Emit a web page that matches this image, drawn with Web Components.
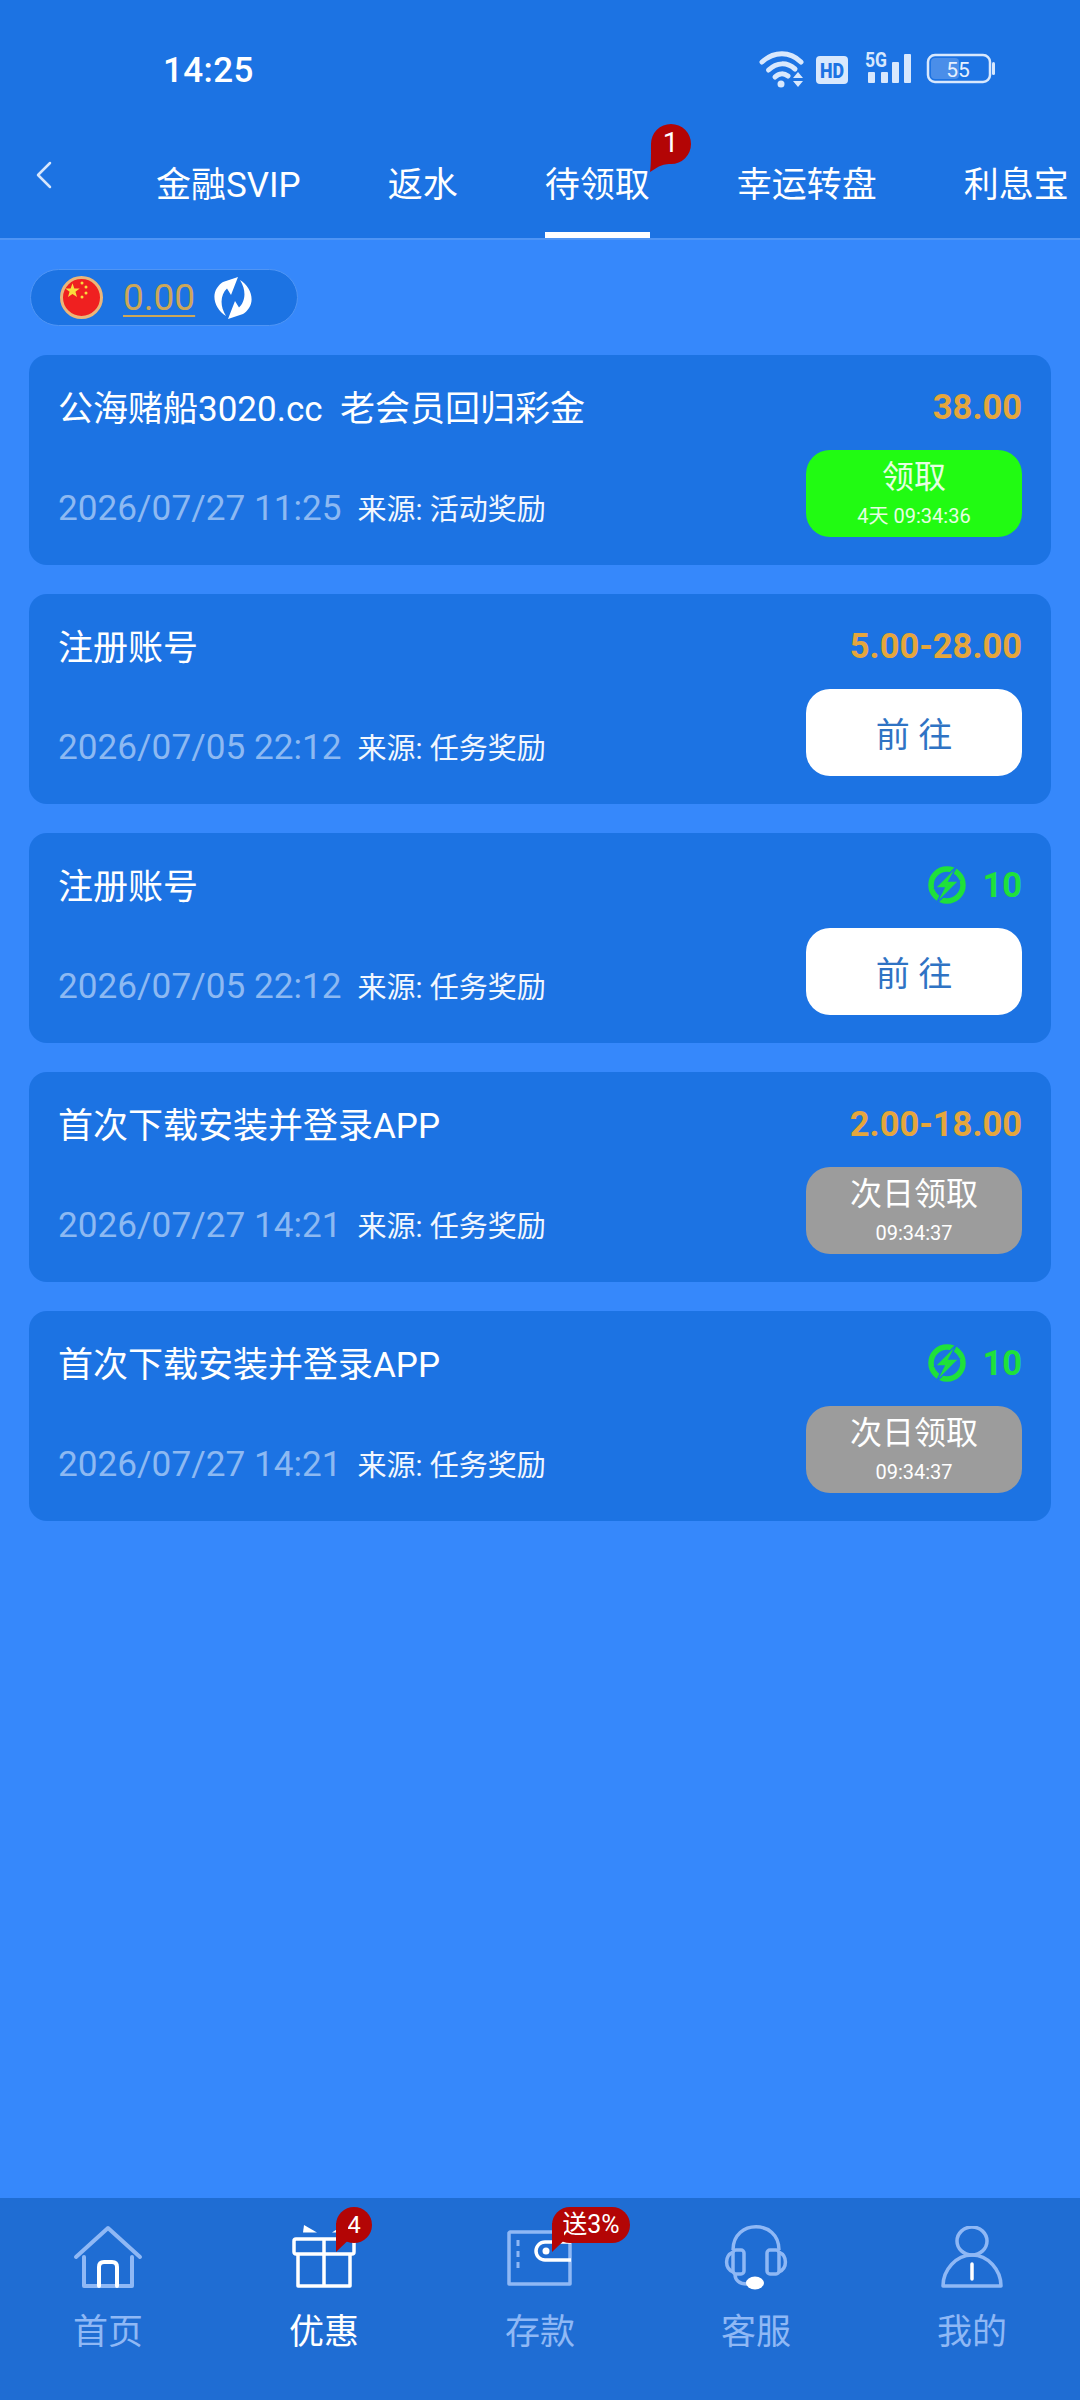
<!DOCTYPE html>
<html lang="zh">
<head>
<meta charset="utf-8">
<title>待领取</title>
<style>
    html, body { margin: 0; padding: 0; }
    body {
        width: 1080px;
        height: 2400px;
        display: flex;
        flex-direction: column;
        background: #3688fb;
        font-family: Roboto, "Noto Sans CJK SC", sans-serif;
        color: #fff;
        overflow: hidden;
    }
</style>
</head>
<body>
<app-header></app-header>
<balance-pill amount="0.00"></balance-pill>
<task-list>
    <task-card title="公海赌船3020.cc&nbsp;&nbsp;老会员回归彩金" amount="38.00" date="2026/07/27 11:25" source="来源: 活动奖励" kind="claim" label="领取" sub="4天 09:34:36"></task-card>
    <task-card title="注册账号" amount="5.00-28.00" date="2026/07/05 22:12" source="来源: 任务奖励" kind="go" label="前 往"></task-card>
    <task-card title="注册账号" energy="10" date="2026/07/05 22:12" source="来源: 任务奖励" kind="go" label="前 往"></task-card>
    <task-card title="首次下载安装并登录APP" amount="2.00-18.00" date="2026/07/27 14:21" source="来源: 任务奖励" kind="wait" label="次日领取" sub="09:34:37"></task-card>
    <task-card title="首次下载安装并登录APP" energy="10" date="2026/07/27 14:21" source="来源: 任务奖励" kind="wait" label="次日领取" sub="09:34:37"></task-card>
</task-list>
<nav-bar></nav-bar>

<script>
// status bar + scrolling tabs
class AppHeader extends HTMLElement {
    constructor() {
        super();
        this.attachShadow({ mode: 'open' });
        this.shadowRoot.innerHTML = `
            <style>
                :host {
                    display: block;
                    flex: none;
                    height: 240px;
                    box-sizing: border-box;
                    background: #1c73e3;
                    border-bottom: 2px solid #4f95f5;
                }
                .status {
                    height: 107px;
                    display: flex;
                    align-items: center;
                    padding: 33px 85px 0 163px;
                    box-sizing: border-box;
                }
                .time { font-size: 35px; font-weight: 500; letter-spacing: .4px; flex: 1; }
                .icons { height: 40px; overflow: visible; }
                .tabs {
                    height: 131px;
                    display: flex;
                    gap: 87px;
                    font-size: 35px;
                    line-height: 42px;
                    white-space: nowrap;
                }
                .back { width: 17px; margin: 54px 17px 0 35px; height: 28px; flex: none; }
                .tab {
                    position: relative;
                    box-sizing: border-box;
                    height: 131px;
                    padding-top: 58px;
                    border-bottom: 6px solid transparent;
                }
                .tab.on { border-bottom-color: #fff; }
                .badge { position: absolute; left: 105px; top: 17px; width: 42px; height: 48px; }
                .badge span {
                    position: absolute; left: 0; top: 0; width: 42px; height: 40px;
                    text-align: center; font-size: 28px; line-height: 38px;
                }
                .badge svg { position: absolute; left: 0; top: 0; }
            </style>
            <div class="status">
                <div class="time">14:25</div>
                <svg class="icons" width="236" height="40" viewBox="0 0 236 40">
                    <g fill="none" stroke="#d8e8fd" stroke-linecap="round" transform="translate(1 0)">
                        <path d="M2 12C14 1 30 1 41 12" stroke-width="5"/>
                        <path d="M8.500 20C17 12 27 12 35 19" stroke-width="5"/>
                        <path d="M15 27C19 23 24 23 28 26" stroke-width="5"/>
                    </g>
                    <circle cx="22" cy="34" r="3.500" fill="#d8e8fd"/>
                    <path d="M34 28l5-6 5 6zM34 31l5 6 5-6z" fill="#d8e8fd"/>
                    <rect x="57" y="6" width="32" height="28" rx="4" fill="#d8e8fd"/>
                    <text x="73" y="28" text-anchor="middle" font-family="Roboto, sans-serif" font-size="21" font-weight="900" fill="#1c73e3" textLength="24" lengthAdjust="spacingAndGlyphs">HD</text>
                    <text x="106" y="17" font-family="Roboto, sans-serif" font-size="20" font-weight="700" fill="#d8e8fd" textLength="22" lengthAdjust="spacingAndGlyphs">5G</text>
                    <g fill="#d8e8fd">
                        <rect x="109" y="22" width="7" height="11" rx="1"/>
                        <rect x="122" y="22" width="7" height="11" rx="1"/>
                        <rect x="133" y="12" width="7" height="21" rx="1"/>
                        <rect x="145" y="4" width="7" height="29" rx="1"/>
                    </g>
                    <rect x="169" y="5" width="62" height="27" rx="7" fill="none" stroke="#d8e8fd" stroke-width="2.500"/>
                    <rect x="172" y="8" width="28" height="21" rx="4" fill="#4a8ee9"/>
                    <rect x="233" y="12" width="3" height="13" rx="1.500" fill="#d8e8fd"/>
                    <text x="199" y="27" text-anchor="middle" font-family="Roboto, sans-serif" font-size="21" fill="#e6f0fe">55</text>
                </svg>
            </div>
            <div class="tabs">
                <svg class="back" viewBox="0 0 17 28" fill="none" stroke="#d6e6fc" stroke-width="2.500" stroke-linecap="round" stroke-linejoin="round"><path d="M15 2L3 14l12 12"/></svg>
                <div class="tab">金融SVIP</div>
                <div class="tab">返水</div>
                <div class="tab on">待领取
                    <div class="badge">
                        <svg width="42" height="48" viewBox="0 0 42 48"><path d="M21 0a20 20 0 0 1 0 40c-6 0-9 1-13 3L0 48c1-7 1-13 1-28A20 20 0 0 1 21 0z" fill="#b30505"/></svg>
                        <span>1</span>
                    </div>
                </div>
                <div class="tab">幸运转盘</div>
                <div class="tab">利息宝</div>
            </div>
        `;
    }
}

// flag + balance + refresh
class BalancePill extends HTMLElement {
    constructor() {
        super();
        this.attachShadow({ mode: 'open' });
    }
    connectedCallback() {
        this.shadowRoot.innerHTML = `
            <style>
                :host {
                    display: flex;
                    flex: none;
                    align-items: center;
                    box-sizing: border-box;
                    width: 268px;
                    height: 57px;
                    margin: 29px 0 0 30px;
                    padding-left: 29px;
                    background: #1c73e3;
                    border: 1px solid #4f95f5;
                    border-radius: 29px;
                }
                .amount {
                    margin: 0 18px 0 20px;
                    font-size: 37px;
                    line-height: 46px;
                    color: #cca759;
                    text-decoration: underline;
                    text-underline-offset: 5px;
                    text-decoration-thickness: 2px;
                }
            </style>
            <svg width="43" height="43" viewBox="0 0 43 43">
                <circle cx="21.500" cy="21.500" r="20" fill="#ef2020" stroke="#ebb679" stroke-width="3"/>
                <path d="M12.500 8l2 5.500 5.800.2-4.600 3.500 1.700 5.600-4.900-3.300-4.900 3.300 1.700-5.600-4.600-3.500 5.800-.2z" transform="translate(1 0) scale(.92)" fill="#fadc3c"/>
                <g fill="#fadc3c"><circle cx="22" cy="7" r="1.500"/><circle cx="26" cy="11" r="1.500"/><circle cx="26" cy="17" r="1.500"/><circle cx="22" cy="21" r="1.500"/></g>
            </svg>
            <span class="amount">${this.getAttribute('amount')}</span>
            <svg width="40" height="42" viewBox="0 0 40 42" fill="#fff">
                <path d="M25 0L18 18L14 11.500C8 17 6 28 13 39C3 33-2 20 4 11C6 8 8 6 10 5z"/>
                <path d="M25 0L18 18L14 11.500C8 17 6 28 13 39C3 33-2 20 4 11C6 8 8 6 10 5z" transform="rotate(180 20 21)"/>
            </svg>
        `;
    }
}

class TaskList extends HTMLElement {
    constructor() {
        super();
        this.attachShadow({ mode: 'open' });
        this.shadowRoot.innerHTML = `
            <style>
                :host {
                    display: flex;
                    flex-direction: column;
                    flex: 1;
                    gap: 29px;
                    padding: 29px 29px 0;
                }
            </style>
            <slot></slot>
        `;
    }
}

class TaskCard extends HTMLElement {
    constructor() {
        super();
        this.attachShadow({ mode: 'open' });
    }
    connectedCallback() {
        const a = (n) => this.getAttribute(n);
        const right = a('energy')
            ? `<div class="energy">
                   <svg width="38" height="38" viewBox="0 0 38 38">
                       <circle cx="19" cy="19" r="16" fill="none" stroke="#1fe13a" stroke-width="5.500"/>
                       <path d="M29 0L7 22h9L8 38l23-23h-10z" fill="#1fe13a" stroke="#1c73e3" stroke-width="1.500"/>
                   </svg>
                   <span>${a('energy')}</span>
               </div>`
            : `<div class="amount">${a('amount')}</div>`;
        const sub = a('sub') ? `<span class="sub">${a('sub')}</span>` : '';
        this.shadowRoot.innerHTML = `
            <style>
                :host {
                    display: block;
                    box-sizing: border-box;
                    height: 210px;
                    padding: 28px 29px 28px;
                    background: #1c73e3;
                    border-radius: 18px;
                }
                .top, .bottom { display: flex; align-items: center; justify-content: space-between; }
                .top { height: 48px; margin-bottom: 19px; }
                .title { font-size: 35px; color: #fff; white-space: nowrap; margin-top: -4px; }
                .amount { font-size: 34.500px; font-weight: 700; color: #e5a63c; }
                .energy { display: flex; align-items: center; gap: 16px; font-size: 34.500px; font-weight: 700; color: #1fe13a; }
                .bottom { height: 87px; }
                .meta { display: flex; align-items: baseline; gap: 16px; margin-top: 28px; white-space: nowrap; }
                .date { font-size: 35.200px; color: #8db9f2; }
                .source { font-size: 29px; color: #f2f7fe; }
                .btn {
                    width: 216px;
                    height: 87px;
                    display: flex;
                    flex-direction: column;
                    align-items: center;
                    justify-content: center;
                    border-radius: 24px;
                    font-size: 32px;
                    line-height: 40px;
                }
                .sub { font-size: 20px; line-height: 26px; margin-top: 6px; }
                .claim, .wait { justify-content: flex-start; padding-top: 7px; box-sizing: border-box; }
                .claim { background: #21fb12; color: #e6ffe2; }
                .wait { background: #9c9c9c; color: #fff; }
                .go { background: #fff; color: #2f73c4; font-size: 34px; padding-top: 4px; box-sizing: border-box; }
            </style>
            <div class="top">
                <div class="title">${a('title')}</div>
                ${right}
            </div>
            <div class="bottom">
                <div class="meta">
                    <span class="date">${a('date')}</span>
                    <span class="source">${a('source')}</span>
                </div>
                <div class="btn ${a('kind')}"><span>${a('label')}</span>${sub}</div>
            </div>
        `;
    }
}

// bottom navigation
const NAV_ICONS = {
    home: `<svg width="70" height="63" viewBox="0 0 70 63" fill="none" stroke-linecap="round" stroke-linejoin="round">
        <path d="M11 32v29h48V32M3 32L35 3l32 29" stroke="#8fb8f5" stroke-width="4"/>
        <path d="M26 61V42q0-5 5-5h8q5 0 5 5v19" stroke="#fff" stroke-width="4"/>
    </svg>`,
    gift: `<svg width="64" height="63" viewBox="0 0 64 63" fill="none" stroke="#fff" stroke-width="3.500" stroke-linejoin="round">
        <rect x="2" y="14" width="60" height="15" rx="2"/>
        <path d="M6 29v32h52V29M32 14v47"/>
        <path d="M12 0l13 7.500H11z" fill="#fff" stroke="none"/>
        <path d="M40 7.500l7-4.500 2 4.500z" fill="#fff" stroke="none"/>
    </svg>`,
    wallet: `<svg width="66" height="58" viewBox="0 0 66 58" fill="none" stroke="#8fb8f5" stroke-width="3.500" stroke-linejoin="round" style="margin-top:5px">
        <path d="M3 2h60v52H2V3z"/>
        <path d="M11 10v32" stroke-dasharray="6 5" stroke-width="3"/>
        <path d="M64 12H38a9 9 0 0 0 0 18h26" stroke="#fff"/>
        <circle cx="39" cy="21" r="3.500" fill="#fff" stroke="none"/>
    </svg>`,
    service: `<svg width="68" height="66" viewBox="0 0 68 66" fill="none" stroke="#8fb8f5" stroke-width="3.500" stroke-linejoin="round">
        <path d="M11 25C11-6 57-6 57 25"/>
        <rect x="11" y="25" width="11" height="24" rx="3"/>
        <rect x="45" y="25" width="12" height="24" rx="3"/>
        <path d="M11 27a11 11 0 0 0 0 20M57 27a11 11 0 0 1 0 20"/>
        <path d="M13 49c0 6 4 10 12 10h8"/>
        <ellipse cx="33" cy="58" rx="9" ry="6.500" fill="#fff" stroke="none"/>
    </svg>`,
    me: `<svg width="62" height="64" viewBox="0 0 62 64" fill="none" stroke="#8fb8f5" stroke-width="3.500" stroke-linejoin="round" style="margin-top:1px">
        <ellipse cx="31" cy="15" rx="15" ry="14"/>
        <path d="M2 60h58c0-16-13-31-29-31S2 44 2 60z"/>
        <path d="M31 38v15" stroke="#fff" stroke-linecap="round"/>
    </svg>`
};

class NavBar extends HTMLElement {
    constructor() {
        super();
        this.attachShadow({ mode: 'open' });
        const items = [
            ['home', '首页'],
            ['gift', '优惠', 'on', '4'],
            ['wallet', '存款', '', '送3%'],
            ['service', '客服'],
            ['me', '我的']
        ];
        const cols = items.map(([icon, label, on, badge]) => `
            <div class="item ${on || ''}">
                <div class="ico">
                    ${NAV_ICONS[icon]}
                    ${badge ? `<div class="badge ${badge.length > 1 ? 'wide' : ''}"><span>${badge}</span><i></i></div>` : ''}
                </div>
                <div class="label">${label}</div>
            </div>`).join('');
        this.shadowRoot.innerHTML = `
            <style>
                :host {
                    display: grid;
                    grid-template-columns: repeat(5, 216px);
                    flex: none;
                    height: 202px;
                    background: #1f6dd3;
                }
                .item { display: flex; flex-direction: column; align-items: center; padding-top: 27px; }
                .ico { position: relative; height: 66px; display: flex; align-items: flex-start; }
                .label { margin-top: 20px; font-size: 35px; line-height: 44px; color: #8fb8f5; }
                .on .label { color: #fff; }
                .badge {
                    position: absolute;
                    left: 44px;
                    top: -18px;
                    min-width: 36px;
                    height: 36px;
                    box-sizing: border-box;
                    border-radius: 18px;
                    background: #b30505;
                    color: #fff;
                    font-size: 24px;
                    line-height: 36px;
                    text-align: center;
                    white-space: nowrap;
                }
                .badge.wide { left: 45px; width: 78px; font-size: 25px; }
                .badge i {
                    position: absolute;
                    left: 0;
                    top: 16px;
                    width: 12px;
                    height: 29px;
                    background: #b30505;
                    clip-path: polygon(0 0, 100% 0, 100% 60%, 0 100%);
                }
            </style>
            ${cols}
        `;
    }
}

customElements.define('app-header', AppHeader);
customElements.define('balance-pill', BalancePill);
customElements.define('task-list', TaskList);
customElements.define('task-card', TaskCard);
customElements.define('nav-bar', NavBar);
</script>
</body>
</html>
